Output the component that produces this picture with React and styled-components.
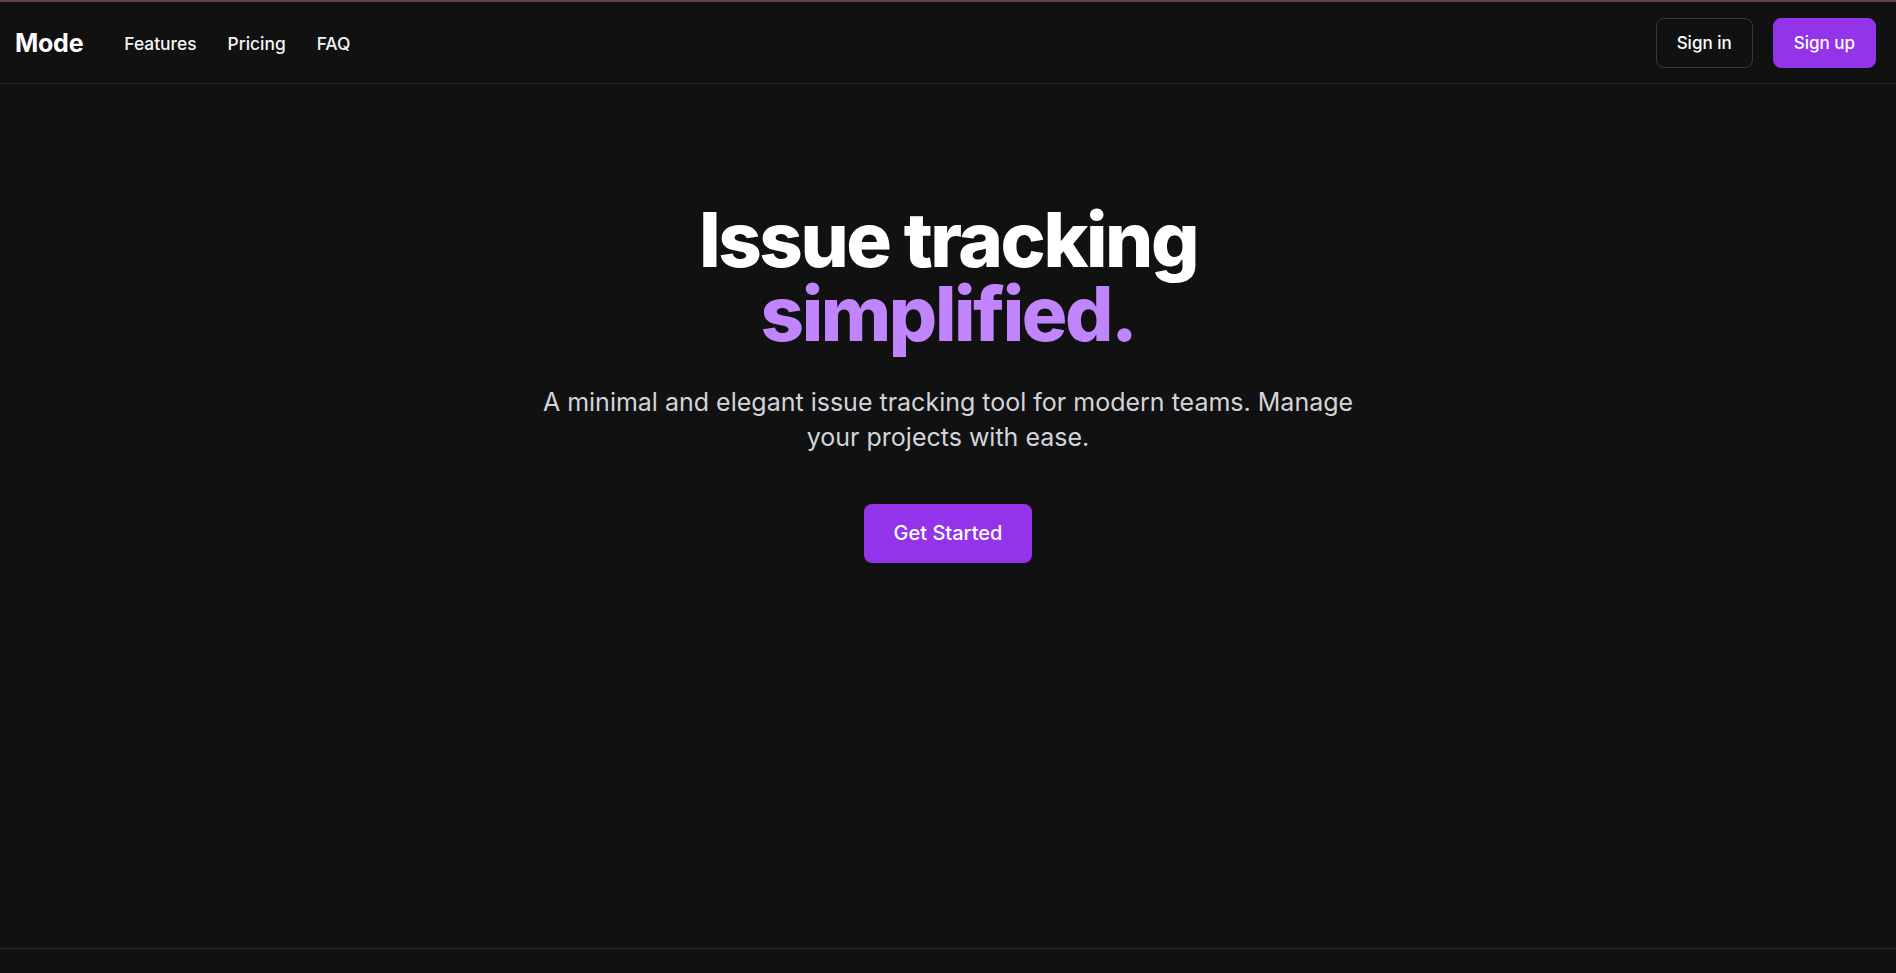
import styled, { createGlobalStyle } from 'styled-components'

const GlobalStyle = createGlobalStyle`
  * {
    box-sizing: border-box;
  }

  html, body {
    margin: 0;
    padding: 0;
    background-color: #111111;
  }

  body {
    font-family: Inter, "Noto Sans", "Liberation Sans", sans-serif;
    color: #ffffff;
  }
`

const Page = styled.div`
  height: 100vh;
  display: grid;
  grid-template-rows: 2px auto 1fr 25px;
  background-color: #111111;
  overflow: hidden;
`

const TopStrip = styled.div`
  background-color: #5a4444;
`

const Header = styled.header`
  display: flex;
  align-items: center;
  justify-content: space-between;
  padding: 16px 20px 15px 15px;
  border-bottom: solid 1px #2a2a2a;
`

const LeftGroup = styled.div`
  display: flex;
  align-items: center;
  gap: 32px;
`

const Logo = styled.a`
  font-size: 25px;
  font-weight: 700;
  letter-spacing: -0.01em;
  color: #ffffff;
  text-decoration: none;
  margin-right: 9px;
`

const NavLinks = styled.nav`
  display: flex;
  align-items: center;
  gap: 31px;
  padding-top: 1px;
`

const NavLink = styled.a`
  font-size: 17.4px;
  font-weight: 500;
  color: #f3f4f6;
  text-decoration: none;
  cursor: pointer;
`

const RightGroup = styled.div`
  display: flex;
  align-items: center;
  gap: 20px;
`

const Button = styled.button`
  font-family: inherit;
  font-size: 17px;
  font-weight: 500;
  line-height: 24px;
  padding: 12px 20px;
  border-radius: 8px;
  color: #ffffff;
  cursor: pointer;
  border: solid 1px ${({ $primary }) => ($primary ? '#9333ea' : '#3a3a3a')};
  background-color: ${({ $primary }) => ($primary ? '#9333ea' : 'transparent')};
`

const Hero = styled.main`
  display: flex;
  flex-direction: column;
  align-items: center;
  padding-top: 118px;
  text-align: center;
`

const Headline = styled.h1`
  margin: 0 0 35px 0;
  font-size: 76px;
  line-height: 74px;
  font-weight: 800;
  letter-spacing: -0.032em;
  color: #ffffff;
`

const Accent = styled.span`
  display: block;
  color: #c084fc;
`

const Subtitle = styled.p`
  margin: 0 0 49px 0;
  max-width: 830px;
  font-size: 25px;
  line-height: 35px;
  font-weight: 400;
  color: #d1d5db;
`

const CtaButton = styled.button`
  font-family: inherit;
  font-size: 20px;
  font-weight: 500;
  line-height: 27px;
  padding: 16px 30px;
  border: none;
  border-radius: 8px;
  background-color: #9333ea;
  color: #ffffff;
  cursor: pointer;
`

const Footer = styled.footer`
  border-top: solid 1px #2e2e2e;
`

const App = () => {
  return (
    <>
      <GlobalStyle />
      <Page>
        <TopStrip />
        <Header>
          <LeftGroup>
            <Logo>Mode</Logo>
            <NavLinks>
              <NavLink>Features</NavLink>
              <NavLink>Pricing</NavLink>
              <NavLink>FAQ</NavLink>
            </NavLinks>
          </LeftGroup>
          <RightGroup>
            <Button>Sign in</Button>
            <Button $primary>Sign up</Button>
          </RightGroup>
        </Header>
        <Hero>
          <Headline>
            Issue tracking
            <Accent>simplified.</Accent>
          </Headline>
          <Subtitle>
            A minimal and elegant issue tracking tool for modern teams. Manage your projects with ease.
          </Subtitle>
          <CtaButton>Get Started</CtaButton>
        </Hero>
        <Footer />
      </Page>
    </>
  )
}

export default App
